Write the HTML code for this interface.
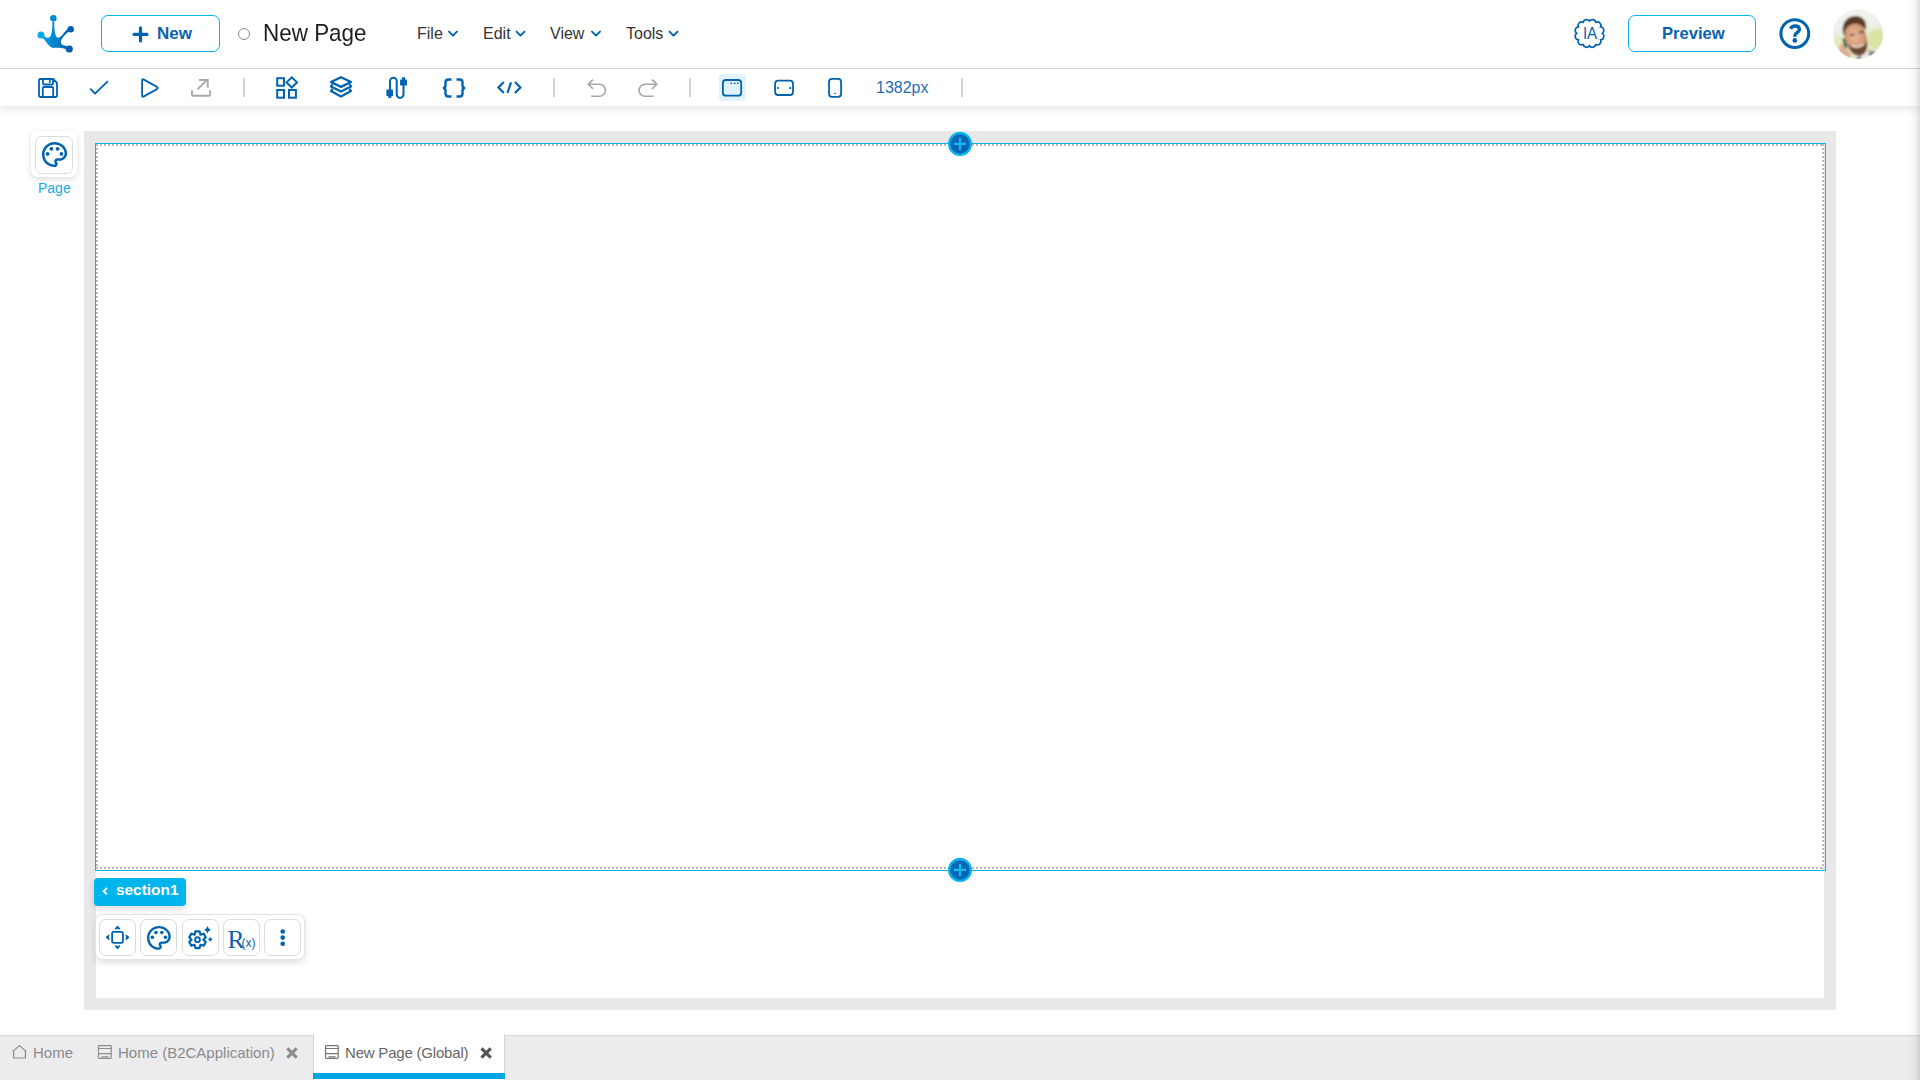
<!DOCTYPE html>
<html><head><meta charset="utf-8">
<style>
*{box-sizing:border-box;margin:0;padding:0}
html,body{width:1920px;height:1080px;overflow:hidden;background:#fff;font-family:"Liberation Sans",sans-serif}
.abs{position:absolute}
svg{position:absolute;overflow:visible}
#header{position:absolute;left:0;top:0;width:1920px;height:68px;background:#fff}
#hline{position:absolute;left:0;top:68px;width:1920px;height:1px;background:#d8d8d8}
#toolbar{position:absolute;left:0;top:69px;width:1920px;height:37px;background:#fff;box-shadow:0 3px 8px rgba(0,0,0,0.10)}
.btn{position:absolute;border:1.5px solid #06b3ea;border-radius:7px;background:#fff;color:#0a62ae;font-weight:bold;font-size:16px}
.menu{position:absolute;top:25px;font-size:16px;color:#333;line-height:18px}
.sep{position:absolute;top:78px;width:2px;height:19px;background:#d3d3d3}
#canvas{position:absolute;left:84px;top:131px;width:1752px;height:879px;background:#e8e8e8}
#page{position:absolute;left:96px;top:143px;width:1728px;height:855px;background:#fff}
#sect{position:absolute;left:95px;top:143px;width:1731px;height:728px;border:1px solid #0cb4ea}
#dots{position:absolute;left:96px;top:144px;width:1728px;height:725px;
 background:
 repeating-linear-gradient(90deg,#b9b9b9 0 2px,transparent 2px 4px) top left/100% 2px no-repeat,
 repeating-linear-gradient(90deg,#b9b9b9 0 2px,transparent 2px 4px) bottom left/100% 2px no-repeat,
 repeating-linear-gradient(180deg,#b9b9b9 0 2px,transparent 2px 4px) top left/2px 100% no-repeat,
 repeating-linear-gradient(180deg,#b9b9b9 0 2px,transparent 2px 4px) top right/2px 100% no-repeat}
.plus{position:absolute;width:26px;height:26px;border-radius:50%;background:#0067b4;border:3px solid #0cb4ea}
#label{position:absolute;left:94px;top:878px;width:92px;height:28px;background:#00b5ec;border-radius:4px;color:#fff;font-weight:bold;font-size:16px;box-shadow:0 3px 6px rgba(0,0,0,0.15)}
#ctb{position:absolute;left:95px;top:914px;width:210px;height:46px;background:#fff;border:1px solid #e3e3e3;border-radius:7px;box-shadow:0 3px 6px rgba(0,0,0,0.12)}
.cb{position:absolute;top:919px;width:37px;height:37px;border:1px solid #dcdcdc;border-radius:7px;background:#fff}
#tabs{position:absolute;left:0;top:1035px;width:1920px;height:45px;background:#ececee;border-top:1px solid #d6d6d8}
.tab{position:absolute;font-size:15px;color:#8a8a8a;top:1045px;line-height:16px}
#pagecard{position:absolute;left:31px;top:131px;width:46px;height:46px;background:#fff;border-radius:7px;box-shadow:0 2px 6px rgba(0,0,0,0.14)}
#pagecard .in{position:absolute;left:4px;top:5px;width:38px;height:38px;border:1px solid #dadde0;border-radius:7px}
#rshadow{position:absolute;left:1908px;top:0;width:12px;height:1080px;background:linear-gradient(90deg,rgba(0,0,0,0) 0,rgba(0,0,0,0.04) 60%,rgba(0,0,0,0.13) 100%)}
</style></head>
<body>
<div id="header"></div>
<div id="hline"></div>
<div id="toolbar"></div>

<!-- New button -->
<div class="btn" style="left:101px;top:15px;width:119px;height:37px"></div>
<div class="abs" style="left:157px;top:25px;font-size:17px;font-weight:bold;color:#0a62ae;line-height:17px">New</div>

<!-- title -->
<div class="abs" style="left:238px;top:28px;width:12px;height:12px;border:1.3px solid #8a8a8a;border-radius:50%"></div>
<div class="abs" style="left:263px;top:21px;font-size:24px;color:#1d1d1f;line-height:24px;transform:scaleX(0.935);transform-origin:0 0;white-space:nowrap">New Page</div>

<div class="menu" style="left:417px">File</div>
<div class="menu" style="left:483px">Edit</div>
<div class="menu" style="left:550px">View</div>
<div class="menu" style="left:626px">Tools</div>

<div class="btn" style="left:1628px;top:15px;width:128px;height:37px"></div>
<div class="abs" style="left:1662px;top:25px;font-size:16.6px;font-weight:bold;color:#0a62ae;line-height:17px">Preview</div>

<div class="sep" style="left:243px"></div>
<div class="sep" style="left:553px"></div>
<div class="sep" style="left:689px"></div>
<div class="sep" style="left:961px"></div>
<div class="abs" style="left:719px;top:74px;width:27px;height:27px;background:#e1f4fd;border-radius:4px"></div>
<div class="abs" style="left:876px;top:79px;font-size:16px;color:#1f6db5;line-height:18px">1382px</div>

<!-- left page card -->
<div id="pagecard"><div class="in"></div></div>
<div class="abs" style="left:38px;top:180px;font-size:14px;color:#1aa9e6;line-height:16px">Page</div>

<!-- canvas -->
<div id="canvas"></div>
<div id="page"></div>
<div id="dots"></div>
<div id="sect"></div>

<div id="label"><span class="abs" style="left:22px;top:3px;line-height:17px;font-size:15.4px">section1</span></div>
<div id="ctb"></div>
<div class="cb" style="left:99px"></div>
<div class="cb" style="left:140px"></div>
<div class="cb" style="left:182px"></div>
<div class="cb" style="left:223px"></div>
<div class="cb" style="left:264px"></div>

<!-- tabs -->
<div id="tabs"></div>
<div class="abs" style="left:313px;top:1034px;width:192px;height:46px;background:#fff;border-left:1px solid #d6d6d8;border-right:1px solid #d6d6d8"></div>
<div class="abs" style="left:313px;top:1073px;width:192px;height:6px;background:#00a3e4"></div>
<div class="tab" style="left:33px">Home</div>
<div class="tab" style="left:118px">Home (B2CApplication)</div>
<div class="tab" style="left:345px;color:#666;letter-spacing:-0.2px">New Page (Global)</div>


<svg width="1920" height="1080" style="left:0;top:0" viewBox="0 0 1920 1080">
<defs>
<linearGradient id="lg" gradientUnits="userSpaceOnUse" x1="37" y1="35" x2="74" y2="38">
<stop offset="0" stop-color="#12b3ee"/><stop offset="0.5" stop-color="#0083cc"/><stop offset="1" stop-color="#0054a6"/></linearGradient>
</defs>
<!-- logo -->
<g fill="url(#lg)">
<circle cx="53.3" cy="18.2" r="3.3"/><circle cx="70.7" cy="29.3" r="3.2"/><circle cx="69.3" cy="49.1" r="3.5"/><circle cx="40.9" cy="34.9" r="3.5"/>
<path d="M52.4,21.5 C52.4,30 52,37 48.4,37.8 C46,38.2 44.5,36.5 43.5,35 L41.5,37.5 C45,39 47.5,45 51.5,47.5 C55,48.5 62,47 66.5,49.5 L69.5,46.5 C66,46 61.5,45 60.9,42.9 C60.5,40 64,35 69.5,31 L68.5,28 C64,32 61,37.8 58.2,37.8 C55,37.8 54.3,30 54.3,21.5 Z"/>
</g>
<!-- New plus -->
<path d="M134,34.4 H147 M140.5,27.9 V40.9" stroke="#0063b0" stroke-width="3.2" stroke-linecap="round" fill="none"/>
<!-- menu chevrons -->
<g stroke="#0063b0" stroke-width="1.9" fill="none" stroke-linecap="round" stroke-linejoin="round">
<path d="M449,31.6 L453,35.6 L457,31.6"/>
<path d="M516.5,31.6 L520.5,35.6 L524.5,31.6"/>
<path d="M592,31.6 L596,35.6 L600,31.6"/>
<path d="M669.5,31.6 L673.5,35.6 L677.5,31.6"/>
</g>
<!-- IA icon -->
<path d="M1589.50,21.10 A3.60,3.60 0 0 1 1595.95,22.23 A3.60,3.60 0 0 1 1600.67,26.95 A3.60,3.60 0 0 1 1602.40,33.40 A3.60,3.60 0 0 1 1600.67,39.85 A3.60,3.60 0 0 1 1595.95,44.57 A3.60,3.60 0 0 1 1589.50,45.70 A3.60,3.60 0 0 1 1583.05,44.57 A3.60,3.60 0 0 1 1578.33,39.85 A3.60,3.60 0 0 1 1576.60,33.40 A3.60,3.60 0 0 1 1578.33,26.95 A3.60,3.60 0 0 1 1583.05,22.23 A3.60,3.60 0 0 1 1589.50,21.10 Z" stroke="#0063b0" stroke-width="1.7" fill="none"/>
<text x="1582.9" y="38.8" font-family="Liberation Sans" font-size="16" textLength="14.3" lengthAdjust="spacingAndGlyphs" fill="#0063b0">IA</text>
<!-- help -->
<circle cx="1794.8" cy="33.6" r="13.9" stroke="#0063b0" stroke-width="3" fill="none"/>
<path d="M1790.5,28.8 C1791.5,26.8 1793.1,26 1795,26 C1797.7,26 1799.4,27.5 1799.4,29.6 C1799.4,32.4 1795.3,32.8 1794.9,35.3 L1794.9,36.8" stroke="#0063b0" stroke-width="3.3" fill="none" stroke-linejoin="round"/>
<circle cx="1794.8" cy="40.4" r="2.3" fill="#0063b0"/>

<!-- toolbar icons -->
<g stroke="#0063b0" stroke-width="1.8" fill="none" stroke-linejoin="round" stroke-linecap="round">
<path transform="translate(38,78)" d="M1,2.2 Q1,1 2.2,1 H15.2 L19,4.8 V17.8 Q19,19 17.8,19 H2.2 Q1,19 1,17.8 Z M5,1 V5.6 Q5,6.5 5.9,6.5 H14.1 Q15,6.5 15,5.6 V1 M11.8,2.6 V4 M4.8,19 V10.2 Q4.8,9 6,9 H14 Q15.2,9 15.2,10.2 V19"/>
<path d="M90.2,88.6 L95,93.6 L107.9,81.2" stroke-linecap="butt"/>
<path d="M142.1,80.6 Q142.1,78.6 143.9,79.6 L157,86.9 Q158.4,88 157,89.1 L143.9,96.4 Q142.1,97.4 142.1,95.4 Z"/>
</g>
<g stroke="#a9a9a9" stroke-width="1.9" fill="none">
<path d="M192,90.3 V94.8 Q192,95.7 192.9,95.7 H209.1 Q210,95.7 210,94.8 V90.3"/>
<path d="M197.4,89.4 L207,79.9 M199,80 H207.8 V87.8"/>
</g>
<g stroke="#0063b0" stroke-width="2" fill="none">
<rect x="277.2" y="78.2" width="6.8" height="7.5"/>
<path d="M291.7,77.3 L297,82.4 L291.7,87.5 L286.6,82.4 Z"/>
<rect x="277.2" y="90" width="6.8" height="7.7"/>
<rect x="289" y="90" width="6.9" height="7.7"/>
</g>
<g stroke="#0063b0" stroke-width="2.3" fill="none" stroke-linejoin="round">
<path d="M341,77.2 L351,82 L341,86.9 L331,82 Z"/>
<path d="M332.6,84.3 L331,86.4 L341,91.5 L351,86.4 L349.4,84.3"/>
<path d="M332.6,88.9 L331,91.1 L341,96.5 L351,91.1 L349.4,88.9"/>
</g>
<g fill="#0063b0">
<path d="M390,90 V81 A3.35,3.35 0 0 1 396.7,81 V94.5 A3.4,3.4 0 0 0 403.5,94.5 V85" stroke="#0063b0" stroke-width="2" fill="none"/>
<rect x="386.4" y="89.6" width="6.6" height="6.4" rx="0.6"/><rect x="388.2" y="95.5" width="3.2" height="2.4"/>
<rect x="400.1" y="79.6" width="6.9" height="6" rx="0.6"/><rect x="402" y="77.3" width="3.2" height="2.6"/>
</g>
<g stroke="#0063b0" stroke-width="2.4" fill="none">
<path d="M451.5,79.5 H448.5 Q445.5,79.5 445.5,82.5 V85.5 Q445.5,87.8 443,88 Q445.5,88.2 445.5,90.5 V93.5 Q445.5,96.5 448.5,96.5 H451.5"/>
<path d="M456.5,79.5 H459.5 Q462.5,79.5 462.5,82.5 V85.5 Q462.5,87.8 465,88 Q462.5,88.2 462.5,90.5 V93.5 Q462.5,96.5 459.5,96.5 H456.5"/>
</g>
<g stroke="#0063b0" stroke-width="2.2" fill="none">
<path d="M503.8,82 L498.4,87.5 L503.8,93"/>
<path d="M511,82.4 L507.5,92.8"/>
<path d="M515,82 L520.4,87.5 L515,93"/>
</g>
<g stroke="#a6a6a6" stroke-width="1.6" fill="none">
<path d="M593,79.6 L588.2,84.3 L593,89 M588.2,84.3 H599.5 A5.95,5.95 0 0 1 599.5,96.2 H591.2"/>
<path d="M652,79.6 L656.8,84.3 L652,89 M656.8,84.3 H645 A5.95,5.95 0 0 0 645,96.2 H653.5"/>
</g>
<g stroke="#0063b0" stroke-width="1.8" fill="none">
<rect x="722.9" y="80" width="18.3" height="15.7" rx="3"/>
<rect x="775.1" y="80.7" width="17.9" height="14.3" rx="3"/>
<rect x="829" y="78.9" width="12.1" height="17.9" rx="3"/>
</g>
<g fill="#0063b0">
<rect x="730.6" y="82.6" width="1.6" height="1.4"/><rect x="733.9" y="82.6" width="1.6" height="1.4"/><rect x="737" y="82.6" width="1.6" height="1.4"/>
<ellipse cx="777.9" cy="87.9" rx="0.9" ry="1.2"/><ellipse cx="790.2" cy="87.9" rx="0.9" ry="1.2"/>
<rect x="834" y="92.8" width="2" height="1"/>
</g>

<!-- page card palette -->
<g transform="translate(39.4,139.4) scale(1.26)" fill="#0063b0"><path d="M12 22C6.49 22 2 17.51 2 12S6.49 2 12 2s10 4.04 10 9c0 3.31-2.69 6-6 6h-1.77c-.28 0-.5.22-.5.5 0 .12.05.23.13.33.41.47.64 1.06.64 1.67 0 1.38-1.12 2.5-2.5 2.5zm0-18c-4.41 0-8 3.59-8 8s3.59 8 8 8c.28 0 .5-.22.5-.5 0-.16-.08-.28-.14-.35-.41-.46-.63-1.05-.63-1.65 0-1.38 1.12-2.5 2.5-2.5H16c2.21 0 4-1.79 4-4 0-3.86-3.59-7-8-7z"/><circle cx="6.5" cy="11.5" r="1.5"/><circle cx="9.5" cy="7.5" r="1.5"/><circle cx="14.5" cy="7.5" r="1.5"/><circle cx="17.5" cy="11.5" r="1.5"/></g>

<!-- plus buttons -->
<g>
<circle cx="960" cy="143.9" r="10.9" fill="#0067b4" stroke="#08b5ec" stroke-width="2.3"/>
<path d="M954,143.9 H966 M960,137.8 V150" stroke="#1ab8ee" stroke-width="2.1"/>
<circle cx="960" cy="869.9" r="10.9" fill="#0067b4" stroke="#08b5ec" stroke-width="2.3"/>
<path d="M954,869.9 H966 M960,863.8 V876" stroke="#1ab8ee" stroke-width="2.1"/>
</g>

<!-- section label chevron -->
<path d="M107,888 L103.6,891.2 L107,894.4" stroke="#fff" stroke-width="1.9" fill="none"/>

<!-- context toolbar icons -->
<g stroke="#0063b0" stroke-width="1.8" fill="none" stroke-linejoin="round">
<rect x="112.1" y="931.9" width="10.8" height="10.9" rx="1.6"/>
</g>
<g fill="#0063b0" stroke="#0063b0" stroke-width="1.2" stroke-linejoin="round">
<path d="M117.5,926.4 L119.7,929 L117.5,928.2 L115.3,929 Z"/>
<path d="M117.5,948.5 L119.7,945.9 L117.5,946.7 L115.3,945.9 Z"/>
<path d="M106.4,937.3 L109,935.1 L108.2,937.3 L109,939.5 Z"/>
<path d="M128.6,937.3 L126,935.1 L126.8,937.3 L126,939.5 Z"/>
</g>
<g transform="translate(144.6,923.6) scale(1.19)" fill="#0063b0"><path d="M12 22C6.49 22 2 17.51 2 12S6.49 2 12 2s10 4.04 10 9c0 3.31-2.69 6-6 6h-1.77c-.28 0-.5.22-.5.5 0 .12.05.23.13.33.41.47.64 1.06.64 1.67 0 1.38-1.12 2.5-2.5 2.5zm0-18c-4.41 0-8 3.59-8 8s3.59 8 8 8c.28 0 .5-.22.5-.5 0-.16-.08-.28-.14-.35-.41-.46-.63-1.05-.63-1.65 0-1.38 1.12-2.5 2.5-2.5H16c2.21 0 4-1.79 4-4 0-3.86-3.59-7-8-7z"/><circle cx="6.5" cy="11.5" r="1.5"/><circle cx="9.5" cy="7.5" r="1.5"/><circle cx="14.5" cy="7.5" r="1.5"/><circle cx="17.5" cy="11.5" r="1.5"/></g>
<path d="M194.55,934.59 L195.42,931.36 L199.58,931.36 L200.45,934.59 L203.69,933.73 L205.77,937.33 L203.40,939.70 L205.77,942.07 L203.69,945.67 L200.45,944.81 L199.58,948.04 L195.42,948.04 L194.55,944.81 L191.31,945.67 L189.23,942.07 L191.60,939.70 L189.23,937.33 L191.31,933.73 Z" stroke="#0063b0" stroke-width="2.2" fill="none" stroke-linejoin="round"/>
<circle cx="197.5" cy="939.7" r="2.4" stroke="#0063b0" stroke-width="1.9" fill="none"/>
<path d="M207.5,925.9 Q208.2,929 211.3,929.7 Q208.2,930.4 207.5,933.5 Q206.8,930.4 203.7,929.7 Q206.8,929 207.5,925.9 Z" fill="#0063b0"/>
<path d="M210.2,936.7 Q210.7,938.8 212.8,939.3 Q210.7,939.8 210.2,941.9 Q209.7,939.8 207.6,939.3 Q209.7,938.8 210.2,936.7 Z" fill="#0063b0"/>
<text x="227.5" y="948" font-family="Liberation Serif" font-size="25.5" fill="#0a62ae">R</text>
<text x="241.5" y="947.3" font-family="Liberation Sans" font-size="12" fill="#0a62ae">(x)</text>
<g fill="#0063b0"><circle cx="282.7" cy="931.5" r="2.3"/><circle cx="282.7" cy="937.6" r="2.3"/><circle cx="282.7" cy="943.7" r="2.3"/></g>

<!-- tab icons -->
<g stroke="#8e8e8e" stroke-width="1.2" fill="none">
<path d="M12.6,1051.6 L19.5,1045.6 L26.4,1051.6 M13.6,1050.8 V1058 H25.4 V1050.8"/>
<rect x="98.5" y="1045.7" width="12.7" height="12.6" rx="0.8"/>
<path d="M98.5,1048.5 H111.2 M98.5,1053.6 H111.2 M101.5,1056.8 H108.5"/>
</g>
<g stroke="#777" stroke-width="1.2" fill="none">
<rect x="325.5" y="1045.7" width="12.7" height="12.6" rx="0.8"/>
<path d="M325.5,1048.5 H338.2 M325.5,1053.6 H338.2 M328.5,1056.8 H335.5"/>
</g>
<path d="M287.3,1048.4 L296.6,1057.6 M296.6,1048.4 L287.3,1057.6" stroke="#8c8c8c" stroke-width="3.1"/>
<path d="M481.5,1048.4 L490.8,1057.6 M490.8,1048.4 L481.5,1057.6" stroke="#555" stroke-width="3.1"/>
</svg>

<svg width="50" height="50" style="left:1833px;top:9px" viewBox="0 0 50 50">
<defs><clipPath id="avc"><circle cx="25" cy="25" r="25"/></clipPath>
<filter id="avb" x="-10%" y="-10%" width="120%" height="120%"><feGaussianBlur stdDeviation="0.8"/></filter>
<linearGradient id="avbg" x1="0" y1="0" x2="0.2" y2="1"><stop offset="0" stop-color="#f5f5f3"/><stop offset="0.45" stop-color="#eef0ea"/><stop offset="0.75" stop-color="#dfe8bd"/><stop offset="1" stop-color="#e6edc8"/></linearGradient>
<radialGradient id="face" cx="0.45" cy="0.4" r="0.6"><stop offset="0" stop-color="#e8b898"/><stop offset="0.7" stop-color="#d29a76"/><stop offset="1" stop-color="#b87a58"/></radialGradient></defs>
<g clip-path="url(#avc)"><g filter="url(#avb)">
<rect x="-2" y="-2" width="54" height="54" fill="url(#avbg)"/>
<ellipse cx="8" cy="38" rx="9" ry="10" fill="#e2eab8"/>
<ellipse cx="44" cy="30" rx="9" ry="10" fill="#d8e4a6"/>
<path d="M26,46 L38,41 L48,46 L50,52 L22,52 Z" fill="#8f9196"/>
<path d="M28,44 L35,42 L38,52 L28,52 Z" fill="#ece8e6"/>
<path d="M10,24 C8,13 15,6 24,7 C31,8 34,13 33,21 L30,18 C25,15 18,17 14,22 L13,30 Z" fill="#5b3b27"/>
<path d="M13,24 C13,17 20,13 27,15 C32,17 34,22 34,29 C34,38 30,45 23,45 C17,45 13,37 13,30 Z" fill="url(#face)" transform="rotate(-12 24 30)"/>
<path d="M15,36 C17,45 24,49 31,45 C34,42 35,37 34,32 C31,38 25,40 19,38 Z" fill="#6d4a36"/>
<path d="M19,36.5 Q25,40 31,35" stroke="#fff" stroke-width="1.2" fill="none" opacity="0.8"/>
<path d="M17,26 L22,25.5 M26,23.5 L31,22.5" stroke="#4a2c1c" stroke-width="1.4"/>
<path d="M6,40 C7,34 11,33 13,37 L18,46 C17,52 10,52 7,47 Z" fill="#deae94"/>
<path d="M9,30 L12,29 L15,38 L12,39 Z" fill="#3f6a50"/>
</g></g></svg>

<div id="rshadow"></div>
</body></html>
